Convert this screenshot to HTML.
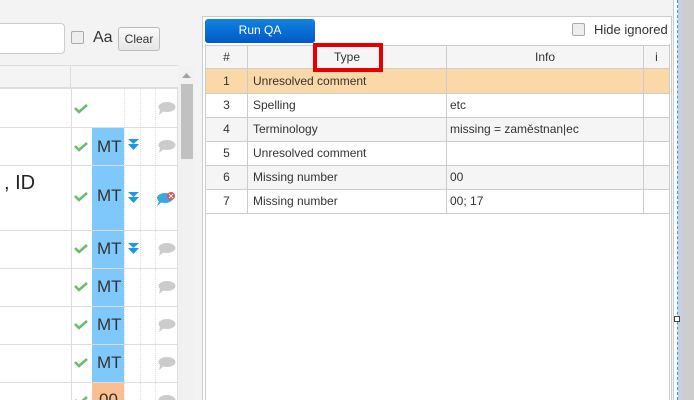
<!DOCTYPE html><html><head><style>
*{margin:0;padding:0;box-sizing:border-box}
html,body{width:694px;height:400px;overflow:hidden}
body{background:#f3f3f3;font-family:"Liberation Sans",sans-serif;color:#333;position:relative}
.a{position:absolute}
.t{font-size:12px}
</style></head><body>
<div class="a" style="left:-6px;top:23px;width:71px;height:31px;background:#fff;border:1px solid #ccc;border-radius:4px"></div>
<div class="a" style="left:71px;top:31px;width:13px;height:13px;border:1px solid #aaa;border-radius:2px;background:#eee"></div>
<div class="a" style="left:93px;top:29px;font-size:16px;color:#333">Aa</div>
<div class="a t" style="left:118px;top:27px;width:42px;height:24px;border:1px solid #bbb;border-radius:3px;background:linear-gradient(#fafafa,#e6e6e6);text-align:center;line-height:22px">Clear</div>
<div class="a" style="left:0;top:65px;width:178px;height:24px;background:#f4f4f4;border-top:1px solid #ddd;border-bottom:2px solid #ddd"></div>
<div class="a" style="left:70px;top:65px;width:1px;height:24px;background:#ddd"></div>
<div class="a" style="left:0;top:89px;width:178px;height:311px;background:#fff"></div>
<div class="a" style="left:71px;top:89px;width:1px;height:311px;background:#ddd"></div>
<div class="a" style="left:177px;top:89px;width:1px;height:311px;background:#ddd"></div>
<div class="a" style="left:124px;top:89px;width:0;height:311px;border-left:1px dotted #ddd"></div>
<div class="a" style="left:140px;top:89px;width:0;height:311px;border-left:1px dotted #ddd"></div>
<div class="a" style="left:155px;top:89px;width:0;height:311px;border-left:1px dotted #ddd"></div>
<div class="a" style="left:92px;top:128px;width:32px;height:254px;background:#7ec8fc"></div>
<div class="a" style="left:92px;top:383px;width:32px;height:17px;background:#f9bf90"></div>
<div class="a" style="left:0;top:127px;width:177px;height:1px;background:#ddd"></div>
<div class="a" style="left:0;top:165px;width:177px;height:1px;background:#ddd"></div>
<div class="a" style="left:0;top:230px;width:177px;height:1px;background:#ddd"></div>
<div class="a" style="left:0;top:268px;width:177px;height:1px;background:#ddd"></div>
<div class="a" style="left:0;top:306px;width:177px;height:1px;background:#ddd"></div>
<div class="a" style="left:0;top:344px;width:177px;height:1px;background:#ddd"></div>
<div class="a" style="left:0;top:382px;width:177px;height:1px;background:#ddd"></div>
<div class="a" style="left:4px;top:172px;font-size:20px;color:#222">, ID</div>
<svg class="a" style="left:0;top:0" width="100" height="400"><g fill="none" stroke="#6dbb6d" stroke-width="2.6"><path d="M75 108l4 4 8-7M75 146l4 4 8-7M75 196l4 4 8-7M75 248l4 4 8-7M75 286l4 4 8-7M75 324l4 4 8-7M75 362l4 4 8-7M75 400l4 4 8-7"/></g></svg>
<div class="a" style="left:97px;top:137px;font-size:17px">MT</div>
<div class="a" style="left:97px;top:186px;font-size:17px">MT</div>
<div class="a" style="left:97px;top:239px;font-size:17px">MT</div>
<div class="a" style="left:97px;top:277px;font-size:17px">MT</div>
<div class="a" style="left:97px;top:315px;font-size:17px">MT</div>
<div class="a" style="left:97px;top:353px;font-size:17px">MT</div>
<div class="a" style="left:99px;top:390px;font-size:17px">00</div>
<svg class="a" style="left:128px;top:139px" width="11" height="12"><path d="M0 0h11L5.5 5zM0 5h11L5.5 11z" fill="#1a9ae0"/></svg>
<svg class="a" style="left:128px;top:192px" width="11" height="12"><path d="M0 0h11L5.5 5zM0 5h11L5.5 11z" fill="#1a9ae0"/></svg>
<svg class="a" style="left:128px;top:243px" width="11" height="12"><path d="M0 0h11L5.5 5zM0 5h11L5.5 11z" fill="#1a9ae0"/></svg>
<svg class="a" style="left:157px;top:101px" width="19" height="15"><ellipse cx="10" cy="6" rx="8.5" ry="5" fill="#ccc"/><path d="M3 9l-1 5 5-4z" fill="#ccc"/></svg>
<svg class="a" style="left:157px;top:139px" width="19" height="15"><ellipse cx="10" cy="6" rx="8.5" ry="5" fill="#ccc"/><path d="M3 9l-1 5 5-4z" fill="#ccc"/></svg>
<svg class="a" style="left:156px;top:191px" width="20" height="16"><ellipse cx="9" cy="7" rx="8" ry="5" fill="#3aa8e0"/><path d="M3 10l-2 5 5-4z" fill="#3aa8e0"/><circle cx="15" cy="5" r="4" fill="#e05050"/><path d="M13 3l4 4M17 3l-4 4" stroke="#fff" stroke-width="1"/></svg>
<svg class="a" style="left:157px;top:242px" width="19" height="15"><ellipse cx="10" cy="6" rx="8.5" ry="5" fill="#ccc"/><path d="M3 9l-1 5 5-4z" fill="#ccc"/></svg>
<svg class="a" style="left:157px;top:280px" width="19" height="15"><ellipse cx="10" cy="6" rx="8.5" ry="5" fill="#ccc"/><path d="M3 9l-1 5 5-4z" fill="#ccc"/></svg>
<svg class="a" style="left:157px;top:318px" width="19" height="15"><ellipse cx="10" cy="6" rx="8.5" ry="5" fill="#ccc"/><path d="M3 9l-1 5 5-4z" fill="#ccc"/></svg>
<svg class="a" style="left:157px;top:356px" width="19" height="15"><ellipse cx="10" cy="6" rx="8.5" ry="5" fill="#ccc"/><path d="M3 9l-1 5 5-4z" fill="#ccc"/></svg>
<svg class="a" style="left:157px;top:394px" width="19" height="6"><ellipse cx="10" cy="6" rx="8.5" ry="5" fill="#ccc"/></svg>
<div class="a" style="left:178px;top:66px;width:17px;height:334px;background:#f1f1f1"></div>
<svg class="a" style="left:182px;top:73px" width="10" height="6"><path d="M0 5h9L4.5 0z" fill="#a3a3a3"/></svg>
<div class="a" style="left:181px;top:84px;width:12px;height:75px;background:#c1c1c1"></div>
<div class="a" style="left:202px;top:16px;width:470px;height:384px;background:#fff;border:1px solid #ccc;border-bottom:none"></div>
<div class="a" style="left:205px;top:19px;width:110px;height:24px;background:linear-gradient(#1283df,#0058c8);border-radius:3px;color:#fff;font-size:12px;text-align:center;line-height:23px">Run QA</div>
<div class="a" style="left:572px;top:23px;width:13px;height:13px;border:1px solid #aaa;border-radius:2px;background:#eee"></div>
<div class="a" style="left:594px;top:22px;font-size:13px;color:#333">Hide ignored</div>
<div class="a" style="left:205px;top:44px;width:465px;height:356px;border-left:1px solid #ccc;border-right:1px solid #ccc"></div>
<div class="a t" style="left:206px;top:45px;width:463px;height:24px;background:#f5f5f5;border-bottom:1px solid #ccc;border-top:1px solid #ccc"></div>
<div class="a" style="left:206px;top:69px;width:463px;height:24px;background:#fbd8a8"></div>
<div class="a" style="left:206px;top:117px;width:463px;height:24px;background:#f5f5f5"></div>
<div class="a" style="left:206px;top:165px;width:463px;height:24px;background:#f5f5f5"></div>
<div class="a" style="left:206px;top:93px;width:463px;height:1px;background:#ccc"></div>
<div class="a" style="left:206px;top:117px;width:463px;height:1px;background:#ccc"></div>
<div class="a" style="left:206px;top:141px;width:463px;height:1px;background:#ccc"></div>
<div class="a" style="left:206px;top:165px;width:463px;height:1px;background:#ccc"></div>
<div class="a" style="left:206px;top:189px;width:463px;height:1px;background:#ccc"></div>
<div class="a" style="left:206px;top:213px;width:463px;height:1px;background:#ccc"></div>
<div class="a" style="left:247px;top:45px;width:1px;height:168px;background:#ccc"></div>
<div class="a" style="left:446px;top:45px;width:1px;height:168px;background:#ccc"></div>
<div class="a" style="left:643px;top:45px;width:1px;height:168px;background:#ccc"></div>
<div class="a t" style="left:206px;top:50px;width:41px;text-align:center">#</div>
<div class="a t" style="left:248px;top:50px;width:198px;text-align:center">Type</div>
<div class="a t" style="left:447px;top:50px;width:196px;text-align:center">Info</div>
<div class="a t" style="left:644px;top:50px;width:25px;text-align:center">i</div>
<div class="a" style="left:313px;top:43px;width:70px;height:29px;border:4px solid #e80000"></div>
<div class="a t" style="left:206px;top:74px;width:41px;text-align:center">1</div><div class="a t" style="left:253px;top:74px">Unresolved comment</div>
<div class="a t" style="left:206px;top:98px;width:41px;text-align:center">3</div><div class="a t" style="left:253px;top:98px">Spelling</div><div class="a t" style="left:450px;top:98px">etc</div>
<div class="a t" style="left:206px;top:122px;width:41px;text-align:center">4</div><div class="a t" style="left:253px;top:122px">Terminology</div><div class="a t" style="left:450px;top:122px">missing = zaměstnan|ec</div>
<div class="a t" style="left:206px;top:146px;width:41px;text-align:center">5</div><div class="a t" style="left:253px;top:146px">Unresolved comment</div>
<div class="a t" style="left:206px;top:170px;width:41px;text-align:center">6</div><div class="a t" style="left:253px;top:170px">Missing number</div><div class="a t" style="left:450px;top:170px">00</div>
<div class="a t" style="left:206px;top:194px;width:41px;text-align:center">7</div><div class="a t" style="left:253px;top:194px">Missing number</div><div class="a t" style="left:450px;top:194px">00; 17</div>
<div class="a" style="left:673px;top:0;width:4px;height:400px;background:#fff;border-left:1px solid #ccc"></div>
<div class="a" style="left:677px;top:0;width:0;height:400px;border-left:1px dashed #3399ff"></div>
<div class="a" style="left:678px;top:0;width:5px;height:400px;background:#c5d0e0"></div>
<div class="a" style="left:683px;top:0;width:11px;height:400px;background:#cdcdcd"></div>
<div class="a" style="left:674px;top:316px;width:6px;height:6px;border:1px solid #444;background:#fff"></div>
</body></html>
